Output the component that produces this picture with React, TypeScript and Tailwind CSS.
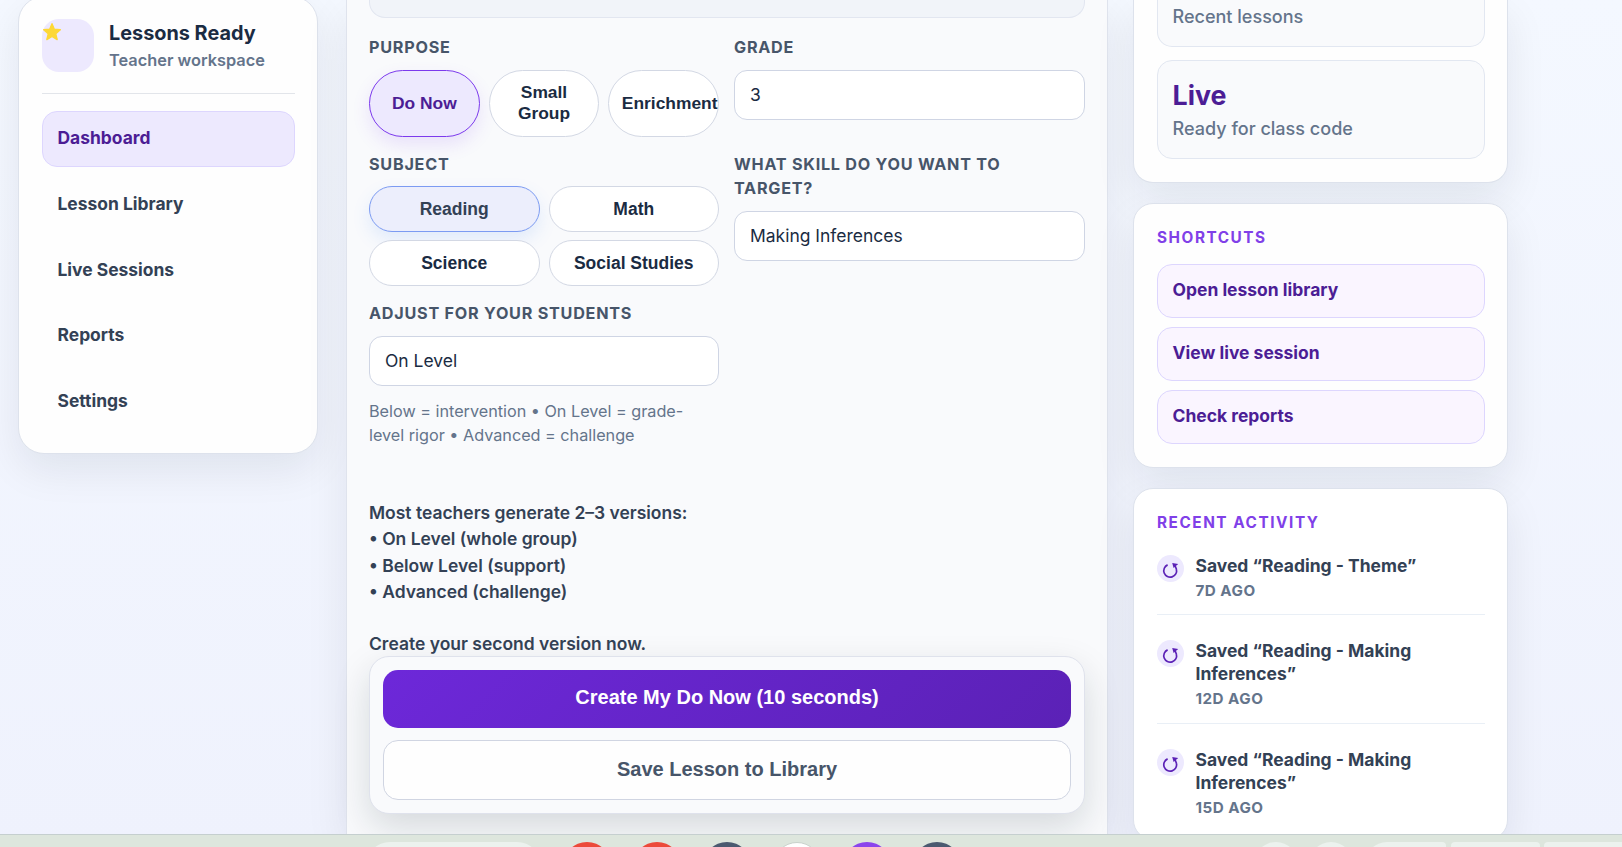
import React from 'react';
import clsx from 'clsx';

const navItems = ['Dashboard', 'Lesson Library', 'Live Sessions', 'Reports', 'Settings'];
const purposes = ['Do Now', 'Small Group', 'Enrichment'];
const subjects = ['Reading', 'Math', 'Science', 'Social Studies'];
const shortcuts = ['Open lesson library', 'View live session', 'Check reports'];

const activity = [
  { title: 'Saved “Reading - Theme”', when: '7D AGO' },
  { title: 'Saved “Reading - Making Inferences”', when: '12D AGO' },
  { title: 'Saved “Reading - Making Inferences”', when: '15D AGO' },
];

const dockApps = [
  'bg-[#ec4a3a]',
  'bg-[#ec4a3a]',
  'bg-[#4b5a70]',
  'bg-white border border-[#c9d2cc]',
  'bg-[#8b45ec]',
  'bg-[#4b5a70]',
];

const cardShadow = 'shadow-[0_16px_40px_rgba(15,23,42,0.08)]';

const Label: React.FC<{ children: React.ReactNode }> = ({ children }) => (
  <div className="text-[16.2px] leading-[24px] font-bold tracking-[0.75px] text-[#475569]">{children}</div>
);

const Field: React.FC<{ value: string }> = ({ value }) => (
  <div className="h-[50px] rounded-[13px] border border-[#cfd5e4] bg-white px-[15px] text-[17.48px] leading-[47px] text-[#1a2b42]">
    {value}
  </div>
);

const StarIcon: React.FC = () => (
  <svg viewBox="0 0 24 24" className="block h-[20px] w-[20px]" fill="#fdd835" stroke="#fdd835" strokeWidth="1.6" strokeLinejoin="round">
    <path d="M12 2l2.8 6.7 7.2.6-5.5 4.7 1.7 7.2L12 17.4l-6.2 3.8 1.7-7.2L2 9.3l7.2-.6z" />
  </svg>
);

// open circle arrow, gap at the top
const RestoreIcon: React.FC = () => (
  <svg viewBox="0 0 16 16" className="h-4 w-4 overflow-visible" fill="none" stroke="#5b21b6" strokeWidth="1.7">
    <path d="M4.6 3.9A6.4 6.4 0 1 0 13.4 8.2Q12.9 5.6 11 3.6" />
    <path d="M9.2 2L15.2 3 10.6 7z" fill="#5b21b6" stroke="none" />
  </svg>
);

const Sidebar: React.FC = () => (
  <aside
    className={clsx(
      'mt-[-4px] ml-[18px] h-[457.5px] w-[300px] shrink-0 rounded-[26px] border border-[#dde2ec] bg-[#fefefe] pt-[22px] pr-[22px] pl-[23px]',
      cardShadow,
    )}
  >
    <div className="flex h-[75px] gap-[15px] border-b border-[#e2e5ea]">
      <div className="h-[53px] w-[52px] rounded-[17px] bg-[#ede9fe] pt-[3px]">
        <StarIcon />
      </div>
      <div className="pt-[1px]">
        <div className="text-[19.85px] leading-[27px] font-bold text-[#1a2b42]">Lessons Ready</div>
        <div className="text-[16.35px] leading-[27px] font-semibold text-[#64748b]">Teacher workspace</div>
      </div>
    </div>
    <nav className="mt-[17px] flex flex-col gap-[10px]">
      {navItems.map((item, i) => (
        <div
          key={item}
          className={clsx(
            'h-[55.8px] rounded-[15px] border px-[14.5px] text-[17.45px] leading-[51px] font-bold',
            i === 0 ? 'border-[#ddd6fe] bg-[#ede9fe] text-[#4c1d95]' : 'border-transparent text-[#334155]',
          )}
        >
          {item}
        </div>
      ))}
    </nav>
  </aside>
);

const LessonForm: React.FC = () => (
  <main
    className={clsx(
      'ml-[28px] h-[834px] w-[762px] shrink-0 border-x border-[#dfe3ed] bg-[#f9fafc] px-[22px]',
      cardShadow,
    )}
  >
    <div className="h-[18px] rounded-b-[16px] border border-t-0 border-[#e2e6f0] bg-[#f1f4f9]" />

    <div className="mt-[17px] grid grid-cols-[350px_351px] gap-x-[15px]">
      <div>
        <Label>PURPOSE</Label>
        <div className="mt-[11px] grid grid-cols-3 gap-[9px] font-['Liberation_Sans',Arial,sans-serif] text-[17.4px] leading-[21px] font-bold">
          {purposes.map((p, i) => (
            <button
              key={p}
              className={clsx(
                'flex h-[67px] min-w-0 items-center rounded-full border pb-px',
                p === 'Enrichment' ? 'justify-start pl-[12.5px]' : 'justify-center px-[13px]',
                i === 0
                  ? 'border-[#7c3aed] bg-[#ede9fe] text-[#4c1d95] shadow-[0_8px_18px_rgba(124,58,237,0.13)]'
                  : 'border-[#d3d8e4] bg-white text-[#1a2b42]',
              )}
            >
              {p}
            </button>
          ))}
        </div>
      </div>
      <div>
        <Label>GRADE</Label>
        <div className="mt-[11px]">
          <Field value="3" />
        </div>
      </div>
    </div>

    <div className="mt-[15px] grid grid-cols-[350px_351px] gap-x-[15px]">
      <div>
        <Label>SUBJECT</Label>
        <div className="mt-[10px] grid grid-cols-2 gap-x-[9px] gap-y-[8px] font-['Liberation_Sans',Arial,sans-serif] text-[17.5px] font-bold">
          {subjects.map((s, i) => (
            <button
              key={s}
              className={clsx(
                'h-[46px] rounded-full border',
                i === 0
                  ? 'border-[#7c9bf2] bg-[#eceefc] text-[#334155] shadow-[0_8px_18px_rgba(59,130,246,0.13)]'
                  : 'border-[#d3d8e4] bg-white text-[#1a2b42]',
              )}
            >
              {s}
            </button>
          ))}
        </div>
      </div>
      <div>
        <Label>
          WHAT SKILL DO YOU WANT TO
          <br />
          TARGET?
        </Label>
        <div className="mt-[11px]">
          <Field value="Making Inferences" />
        </div>
      </div>
    </div>

    <div className="mt-[15px] w-[350px]">
      <Label>ADJUST FOR YOUR STUDENTS</Label>
      <div className="mt-[11px]">
        <Field value="On Level" />
      </div>
      <p className="mt-[12.5px] pr-[20px] text-[16.22px] leading-[24px] text-[#64748b]">
        Below = intervention • On Level = grade-level rigor • Advanced = challenge
      </p>
    </div>

    <div className="mt-[53.5px] text-[17.48px] leading-[26.3px] font-semibold text-[#334155]">
      <p>Most teachers generate 2–3 versions:</p>
      <p>• On Level (whole group)</p>
      <p>• Below Level (support)</p>
      <p>• Advanced (challenge)</p>
      <p className="mt-[25.5px]">Create your second version now.</p>
    </div>

    <div className="mt-[-1px] flex h-[158px] flex-col gap-[12px] rounded-[20px] border border-[#dfe2ec] bg-[#f9fafc] p-[13px] font-['Liberation_Sans',Arial,sans-serif] text-[20px] font-bold shadow-[0_14px_36px_rgba(15,35,42,0.15)]">
      <button className="h-[58px] shrink-0 rounded-[15px] bg-linear-135 from-[#6d28d9] to-[#5b21b6] pb-[3px] text-white">
        Create My Do Now (10 seconds)
      </button>
      <button className="h-[60px] shrink-0 rounded-[15px] border border-[#d0d5e2] bg-[#fefefe] pb-[2px] text-[#475569]">
        Save Lesson to Library
      </button>
    </div>
  </main>
);

const CardTitle: React.FC<{ children: React.ReactNode }> = ({ children }) => (
  <h3 className="text-[15.3px] leading-[22px] font-bold tracking-[1.55px] text-[#8040e8]">{children}</h3>
);

const Rail: React.FC = () => (
  <div className="ml-[25px] flex w-[375px] shrink-0 flex-col gap-[20.5px]">
    <section className={clsx('h-[182.5px] shrink-0 rounded-b-[20px] border border-t-0 border-[#dde2ec] bg-[#fefefe] pr-[22px] pl-[23px]', cardShadow)}>
      <div className="h-[47px] rounded-b-[15px] border border-t-0 border-[#e2e7f1] bg-[#f9fafc] px-[14.5px] pt-[4px] text-[18.05px] leading-[26px] font-medium text-[#64748b]">
        Recent lessons
      </div>
      <div className="mt-[13px] h-[99px] rounded-[15px] border border-[#e2e7f1] bg-[#f9fafc] px-[14.5px] pt-[16px]">
        <div className="text-[26.8px] leading-[36px] font-bold text-[#4c1d95]">Live</div>
        <div className="mt-[3px] text-[18.05px] leading-[26px] font-medium text-[#64748b]">Ready for class code</div>
      </div>
    </section>

    <section className={clsx('h-[264.5px] shrink-0 rounded-[20px] border border-[#dde2ec] bg-[#fefefe] pt-[23px] pr-[22px] pl-[23px]', cardShadow)}>
      <CardTitle>SHORTCUTS</CardTitle>
      <div className="mt-[15px] flex flex-col gap-[9.7px]">
        {shortcuts.map((s) => (
          <a
            key={s}
            className="block h-[53.5px] rounded-[15px] border border-[#ddd6fe] bg-[#faf5ff] px-[14.5px] text-[17.48px] leading-[50px] font-bold text-[#4c1d95]"
          >
            {s}
          </a>
        ))}
      </div>
    </section>

    <section className={clsx('h-[352px] shrink-0 rounded-[20px] border border-[#dde2ec] bg-white pt-[23px] pr-[22px] pl-[23px]', cardShadow)}>
      <CardTitle>RECENT ACTIVITY</CardTitle>
      <ul>
        {activity.map((a, i) => (
          <li
            key={i}
            className={clsx(
              'flex gap-[11.5px]',
              i === 0 ? 'pt-[21px] pb-[12px]' : 'pt-[25px] pb-[13px]',
              i < activity.length - 1 && 'border-b border-[#e9eff6]',
            )}
          >
            <span className="flex h-[27px] w-[27px] shrink-0 items-center justify-center rounded-full bg-[#ede9fe]">
              <RestoreIcon />
            </span>
            <div className="mt-[-1px]">
              <div className="text-[17.48px] leading-[23px] font-bold text-[#334155]">{a.title}</div>
              <div className="mt-[3px] text-[15.2px] leading-[22px] font-bold tracking-[0.48px] text-[#64748b]">{a.when}</div>
            </div>
          </li>
        ))}
      </ul>
    </section>
  </div>
);

// only the top edge of the system shelf is on screen
const Dock: React.FC = () => (
  <footer className="relative flex h-[13px] items-start overflow-hidden border-t border-[#c5cfcf] bg-[#dde6dd] pt-[7px]">
    <div className="ml-[366px] h-[48px] w-[175px] shrink-0 rounded-full bg-[#ecf2ee]" />
    <div className="ml-[22px] flex shrink-0 gap-[22px]">
      {dockApps.map((c, i) => (
        <span key={i} className={clsx('h-[48px] w-[48px] rounded-full', c)} />
      ))}
    </div>
    <div className="ml-[292.5px] flex shrink-0">
      <span className="h-[44px] w-[44px] rounded-full bg-[#ecf2ee]" />
      <span className="ml-[11px] h-[44px] w-[44px] rounded-full bg-[#ecf2ee]" />
      <span className="ml-[12px] h-[44px] w-[81.5px] rounded-l-[22px] rounded-r-[4px] bg-[#ecf2ee]" />
      <span className="ml-[5px] h-[44px] w-[89px] rounded-[4px] bg-[#ecf2ee]" />
      <span className="ml-[4px] h-[44px] w-[100px] rounded-l-[4px] bg-[#ecf2ee]" />
    </div>
  </footer>
);

const App: React.FC = () => (
  <div className="flex h-[847px] w-[1622px] flex-col overflow-hidden bg-linear-to-b from-[#f4f8ff] to-[#eff2fd] font-['Inter',sans-serif]">
    <div className="flex h-[834px] shrink-0 items-start overflow-hidden">
      <Sidebar />
      <LessonForm />
      <Rail />
    </div>
    <Dock />
  </div>
);

export default App;
